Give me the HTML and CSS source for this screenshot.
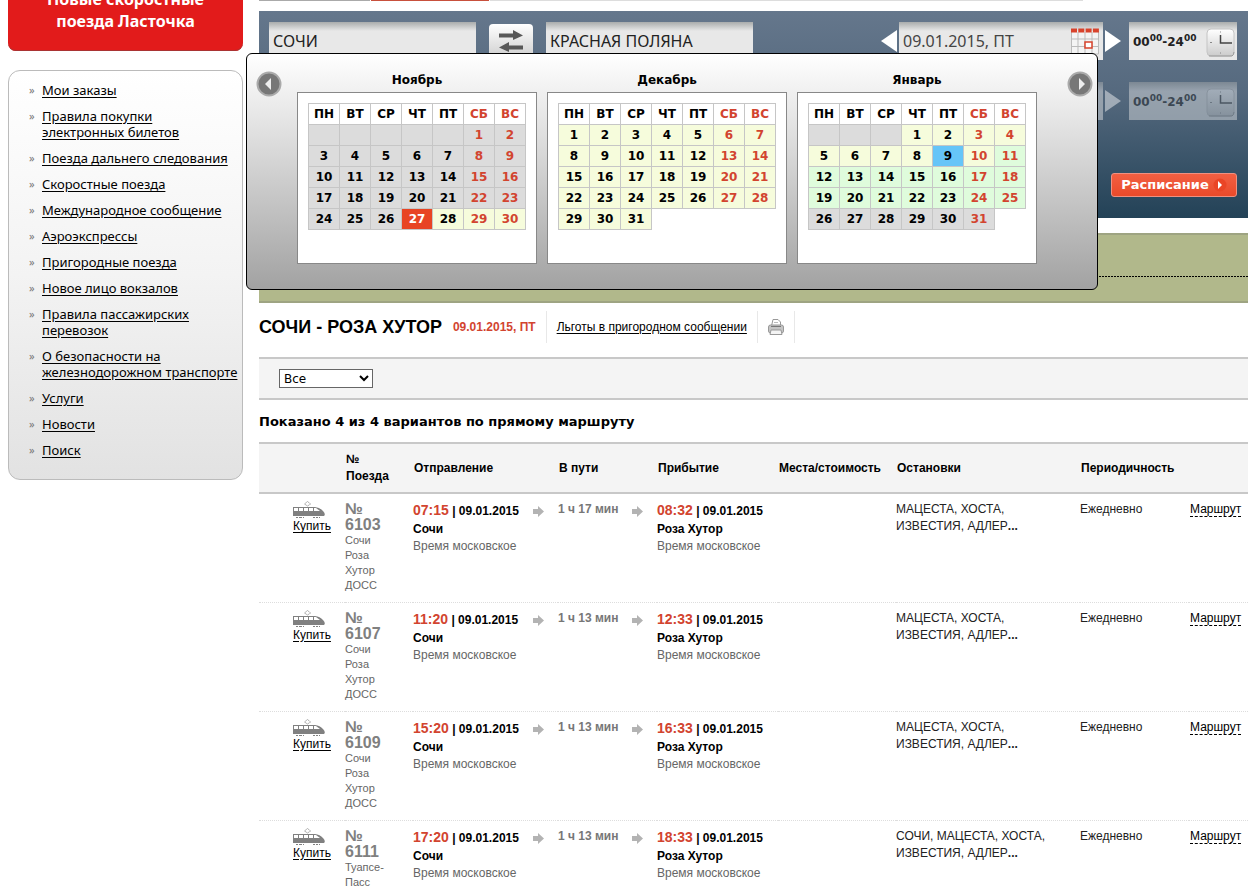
FILE: index.html
```html
<!DOCTYPE html>
<html lang="ru">
<head>
<meta charset="utf-8">
<title>Расписание: Сочи - Роза Хутор</title>
<link rel="stylesheet" href="styles.css">
</head>
<body>
<svg class="defs" aria-hidden="true">
  <symbol id="train" viewBox="0 0 32 17">
    <path d="M11.500 3 14.500 .5 17.500 3 14.500 5Z" fill="none" stroke="#888" stroke-dasharray="1.500 1"/>
    <path d="M0 6H22Q27 6.500 30 10Q33 13 31 15H0Z" fill="#808080"/>
    <path d="M1 7h4v3H1zM6 7h4v3H6zM11 7h4v3h-4zM16 7h4v3h-4zM21 7h2l4 3h-6z" fill="#fff"/>
    <path d="M3 16.500h2m1 0h3M10 16.500h1M20 16.500h2m1 0h2m1 0h1" stroke="#808080"/>
  </symbol>
  <symbol id="arrow" viewBox="0 0 11 11">
    <path d="M0 3h5V0l6 5.500L5 11V8H0z" fill="#b3b3b3"/>
  </symbol>
  <symbol id="clock" viewBox="0 0 30 29">
    <rect x="1" y="1" width="27" height="27" rx="4" fill="url(#face)" stroke="#c4c4c4"/>
    <path d="M3 28h23q2-1 2-4" fill="none" stroke="#999"/>
    <path d="M14.500 7v8H26" fill="none" stroke="#444" stroke-width="1.500"/>
    <path d="M14 4h1M4 14.500h2M14 25h1" stroke="#888"/>
  </symbol>
  <linearGradient id="face" x2="0" y2="1"><stop stop-color="#fff"/><stop offset="1" stop-color="#ccc"/></linearGradient>
</svg>
<div class="page">
  <aside class="sidebar">
    <a class="banner" href="#"><span>Новые скоростные поезда Ласточка</span></a>
    <nav class="menu">
      <ul>
        <li><a href="#">Мои заказы</a></li>
        <li><a href="#">Правила покупки<br>электронных билетов</a></li>
        <li><a href="#">Поезда дальнего следования</a></li>
        <li><a href="#">Скоростные поезда</a></li>
        <li><a href="#">Международное сообщение</a></li>
        <li><a href="#">Аэроэкспрессы</a></li>
        <li><a href="#">Пригородные поезда</a></li>
        <li><a href="#">Новое лицо вокзалов</a></li>
        <li><a href="#">Правила пассажирских<br>перевозок</a></li>
        <li><a href="#">О безопасности на<br>железнодорожном транспорте</a></li>
        <li><a href="#">Услуги</a></li>
        <li><a href="#">Новости</a></li>
        <li><a href="#">Поиск</a></li>
      </ul>
    </nav>
  </aside>
  <main class="content">
    <div class="tabs"><span class="tab"></span><span class="tab tab-active"></span><span class="tab tab-rest"></span></div>
    <form class="search">
      <div class="search-row">
        <input class="field station" aria-label="Откуда" value="СОЧИ">
        <button class="swap" type="button" aria-label="Поменять местами">
          <svg width="26" height="24" viewBox="0 0 26 24"><path d="M1 4.500h14V1l10 5.500L15 11V8.500H1zM25 16.500H11V13L1 18.500 11 23v-2.500h14z" fill="#585858"/></svg>
        </button>
        <input class="field station" aria-label="Куда" value="КРАСНАЯ ПОЛЯНА">
        <div class="when">
          <button class="step" type="button" aria-label="Предыдущий день"><svg width="16" height="22"><path d="M16 0v22L0 11z" fill="#fff"/></svg></button>
          <div class="field date">
            <input aria-label="Дата туда" value="09.01.2015, ПТ">
            <svg width="28" height="27" viewBox="0 0 28 27"><path d="M.5 3v23h27V3M.5 11h27M.5 18.500h27M7 4v22M14 4v22M21 4v22" fill="#f4f4f4" stroke="#bbb"/><path d="M0 2.500h28" stroke="#d8432c" stroke-width="4" stroke-dasharray="6 1.300"/><path d="M14 14h7v6h-7z" fill="#fff" stroke="#d8432c" stroke-width="1.500"/></svg>
          </div>
          <button class="step" type="button" aria-label="Следующий день"><svg width="16" height="22"><path d="M0 0v22L16 11z" fill="#fff"/></svg></button>
        </div>
        <button class="field time" type="button"><span>00<sup>00</sup>-24<sup>00</sup></span><svg width="30" height="29"><use href="#clock"/></svg></button>
      </div>
      <div class="search-row row-back">
        <div class="when">
          <div class="field date"><input aria-label="Дата обратно"></div>
          <button class="step" type="button" aria-label="Следующий день"><svg width="16" height="22"><path d="M0 0v22L16 11z" fill="#fff"/></svg></button>
        </div>
        <button class="field time" type="button"><span>00<sup>00</sup>-24<sup>00</sup></span><svg width="30" height="29"><use href="#clock"/></svg></button>
      </div>
      <button class="submit" type="submit">Расписание<svg width="14" height="14"><circle cx="7" cy="7" r="6.500" fill="#ea4526"/><path d="M5 3v8l4-4z" fill="#fff"/></svg></button>

      <div class="calendar">
        <button class="turn" type="button" aria-label="Назад"><svg width="26" height="26"><circle cx="13" cy="13" r="11.500" fill="#777" stroke="#aaa" stroke-width="2"/><path d="M15 7v12l-6-6z" fill="#eee"/></svg></button>
        <div class="months">
          <section class="month">
            <h2>Ноябрь</h2>
            <div class="sheet"><table>
              <tr><th>ПН<th>ВТ<th>СР<th>ЧТ<th>ПТ<th>СБ<th>ВС
              <tr class="past"><td><td><td><td><td><td>1<td>2
              <tr class="past"><td>3<td>4<td>5<td>6<td>7<td>8<td>9
              <tr class="past"><td>10<td>11<td>12<td>13<td>14<td>15<td>16
              <tr class="past"><td>17<td>18<td>19<td>20<td>21<td>22<td>23
              <tr class="past"><td>24<td>25<td>26<td class="today">27<td class="open">28<td class="open">29<td class="open">30
            </table></div>
          </section>
          <section class="month">
            <h2>Декабрь</h2>
            <div class="sheet"><table>
              <tr><th>ПН<th>ВТ<th>СР<th>ЧТ<th>ПТ<th>СБ<th>ВС
              <tr><td>1<td>2<td>3<td>4<td>5<td>6<td>7
              <tr><td>8<td>9<td>10<td>11<td>12<td>13<td>14
              <tr><td>15<td>16<td>17<td>18<td>19<td>20<td>21
              <tr><td>22<td>23<td>24<td>25<td>26<td>27<td>28
              <tr><td>29<td>30<td>31
            </table></div>
          </section>
          <section class="month">
            <h2>Январь</h2>
            <div class="sheet"><table>
              <tr><th>ПН<th>ВТ<th>СР<th>ЧТ<th>ПТ<th>СБ<th>ВС
              <tr><td class="none"><td class="none"><td class="none"><td>1<td>2<td>3<td>4
              <tr><td>5<td>6<td>7<td>8<td class="chosen">9<td>10<td class="sale">11
              <tr class="later"><td>12<td>13<td>14<td>15<td>16<td>17<td>18
              <tr class="later"><td>19<td>20<td>21<td>22<td>23<td>24<td>25
              <tr class="past"><td>26<td>27<td>28<td>29<td>30<td>31
            </table></div>
          </section>
        </div>
        <button class="turn turn-next" type="button" aria-label="Вперёд"><svg width="26" height="26"><circle cx="13" cy="13" r="11.500" fill="#777" stroke="#aaa" stroke-width="2"/><path d="M12 7v12l6-6z" fill="#eee"/></svg></button>
      </div>
    </form>
    <div class="notice"></div>

    <header class="title">
      <h1>СОЧИ - РОЗА ХУТОР</h1>
      <span class="title-date">09.01.2015, ПТ</span>
      <span class="cell"><a href="#">Льготы в пригородном сообщении</a></span>
      <button class="cell print" type="button" aria-label="Печать">
        <svg width="16" height="16" viewBox="0 0 16 16"><path d="M3.500 7 5 .5h5L12.500 3V7" fill="#fff" stroke="#999"/><path d="M6 3.500h4" stroke="#bbb"/><rect x=".5" y="6" width="15" height="8" rx="2" fill="#c4c4c4" stroke="#999"/><path d="M3 7.500h10" stroke="#777"/><path d="M3 11h10l1 4.500H2z" fill="#f4f4f4" stroke="#999"/></svg>
      </button>
    </header>
    <div class="filter">
      <select aria-label="Фильтр"><option>Все</option></select>
    </div>
    <p class="shown">Показано 4 из 4 вариантов по прямому маршруту</p>

    <table class="trains">
      <colgroup><col class="c-buy"><col class="c-num"><col class="c-dep"><col class="c-dur"><col class="c-arr"><col class="c-cost"><col><col class="c-per"><col class="c-route"></colgroup>
      <thead>
        <tr><th></th><th>№ Поезда</th><th>Отправление</th><th>В пути</th><th>Прибытие</th><th>Места/стоимость</th><th>Остановки</th><th>Периодичность</th><th></th></tr>
      </thead>
      <tbody>
        <tr>
          <td class="buy"><svg width="32" height="17"><use href="#train"/></svg><a href="#">Купить</a></td>
          <td class="num"><b>№ 6103</b><span>Сочи Роза Хутор ДОСС</span></td>
          <td><div class="leg"><div><b><i>07:15</i> | 09.01.2015</b><b>Сочи</b><span>Время московское</span></div><svg width="11" height="11"><use href="#arrow"/></svg></div></td>
          <td><div class="leg"><strong>1 ч 17 мин</strong><svg width="11" height="11"><use href="#arrow"/></svg></div></td>
          <td><div class="leg"><div><b><i>08:32</i> | 09.01.2015</b><b>Роза Хутор</b><span>Время московское</span></div></div></td>
          <td></td>
          <td class="stops">МАЦЕСТА, ХОСТА, ИЗВЕСТИЯ, АДЛЕР<b>...</b></td>
          <td>Ежедневно</td>
          <td><a class="route" href="#">Маршрут</a></td>
        </tr>
        <tr>
          <td class="buy"><svg width="32" height="17"><use href="#train"/></svg><a href="#">Купить</a></td>
          <td class="num"><b>№ 6107</b><span>Сочи Роза Хутор ДОСС</span></td>
          <td><div class="leg"><div><b><i>11:20</i> | 09.01.2015</b><b>Сочи</b><span>Время московское</span></div><svg width="11" height="11"><use href="#arrow"/></svg></div></td>
          <td><div class="leg"><strong>1 ч 13 мин</strong><svg width="11" height="11"><use href="#arrow"/></svg></div></td>
          <td><div class="leg"><div><b><i>12:33</i> | 09.01.2015</b><b>Роза Хутор</b><span>Время московское</span></div></div></td>
          <td></td>
          <td class="stops">МАЦЕСТА, ХОСТА, ИЗВЕСТИЯ, АДЛЕР<b>...</b></td>
          <td>Ежедневно</td>
          <td><a class="route" href="#">Маршрут</a></td>
        </tr>
        <tr>
          <td class="buy"><svg width="32" height="17"><use href="#train"/></svg><a href="#">Купить</a></td>
          <td class="num"><b>№ 6109</b><span>Сочи Роза Хутор ДОСС</span></td>
          <td><div class="leg"><div><b><i>15:20</i> | 09.01.2015</b><b>Сочи</b><span>Время московское</span></div><svg width="11" height="11"><use href="#arrow"/></svg></div></td>
          <td><div class="leg"><strong>1 ч 13 мин</strong><svg width="11" height="11"><use href="#arrow"/></svg></div></td>
          <td><div class="leg"><div><b><i>16:33</i> | 09.01.2015</b><b>Роза Хутор</b><span>Время московское</span></div></div></td>
          <td></td>
          <td class="stops">МАЦЕСТА, ХОСТА, ИЗВЕСТИЯ, АДЛЕР<b>...</b></td>
          <td>Ежедневно</td>
          <td><a class="route" href="#">Маршрут</a></td>
        </tr>
        <tr>
          <td class="buy"><svg width="32" height="17"><use href="#train"/></svg><a href="#">Купить</a></td>
          <td class="num"><b>№ 6111</b><span>Туапсе-Пасс</span></td>
          <td><div class="leg"><div><b><i>17:20</i> | 09.01.2015</b><b>Сочи</b><span>Время московское</span></div><svg width="11" height="11"><use href="#arrow"/></svg></div></td>
          <td><div class="leg"><strong>1 ч 13 мин</strong><svg width="11" height="11"><use href="#arrow"/></svg></div></td>
          <td><div class="leg"><div><b><i>18:33</i> | 09.01.2015</b><b>Роза Хутор</b><span>Время московское</span></div></div></td>
          <td></td>
          <td class="stops">СОЧИ, МАЦЕСТА, ХОСТА, ИЗВЕСТИЯ, АДЛЕР<b>...</b></td>
          <td>Ежедневно</td>
          <td><a class="route" href="#">Маршрут</a></td>
        </tr>
      </tbody>
    </table>
  </main>
</div>
</body>
</html>
```
FILE: styles.css
```css
* { box-sizing: border-box; }

body {
  margin: 0;
  background: #fff;
  color: #000;
  font: 12px/17px "Liberation Sans", Arial, sans-serif;
}

a { color: inherit; }
button { padding: 0; border: 0; background: none; font: inherit; color: inherit; }
svg { display: block; flex: none; }
.defs { position: absolute; width: 0; height: 0; }

.page { display: flex; align-items: flex-start; gap: 16px; padding: 0 8px; }

/* sidebar */
.sidebar { flex: 0 0 235px; }

.banner {
  display: flex;
  align-items: flex-end;
  height: 51px;
  padding: 0 32px 19px;
  overflow: hidden;
  border-radius: 0 0 8px 8px;
  background: #e21b1b;
  box-shadow: inset 0 -1px #a33;
  color: #fff;
  font: bold 16px/22px "Noto Sans", sans-serif;
  text-align: center;
  text-decoration: none;
}

.menu {
  margin-top: 19px;
  padding: 11px 2px 11px 33px;
  border: 1px solid #bbb;
  border-radius: 12px;
  background: linear-gradient(#fff, #f3f3f3 50%, #e2e2e2);
  font: 13px/16px "Noto Sans", Verdana, sans-serif;
}

.menu ul { margin: 0; padding: 0; list-style: none; }
.menu li { position: relative; margin-bottom: 10px; }
.menu li::before { content: "»"; position: absolute; left: -13px; color: #777; font-size: 11px; }
.menu a { text-underline-offset: 2px; }

/* search panel */
.content { flex: 1; min-width: 0; }
.tabs { display: flex; gap: 1px; height: 11px; }
.tab { flex: 0 0 111px; height: 1px; background: #aaa; }
.tab-active { flex-basis: 118px; background: #c8503c; }
.tab-rest { flex-basis: 593px; background: #ddd; }

.search {
  position: relative;
  height: 207px;
  padding: 11px 11px 0 10px;
  background: linear-gradient(#65778c, #55697e 40%, #234257);
}

.search-row { display: flex; align-items: flex-start; margin-bottom: 22px; }
.row-back { justify-content: flex-end; opacity: .45; }

.field {
  height: 38px;
  border: 0;
  background: linear-gradient(#a9acac, #e8e8e8 9px);
  color: #222;
  font: 16px/20px "Noto Sans", Tahoma, sans-serif;
}
.station { width: 207px; padding: 0 4px; }
.swap {
  display: flex;
  justify-content: center;
  width: 44px;
  height: 36px;
  margin: 2px 13px 0;
  padding-top: 5px;
  border-radius: 4px;
  background: linear-gradient(#fff, #ccc);
}
.when { display: flex; gap: 2px; margin-left: auto; }
.step { align-self: center; }
.date { display: flex; align-items: center; justify-content: space-between; width: 204px; padding: 0 4px; }
.date input { width: 140px; padding: 0; border: 0; background: none; color: #444; font: inherit; }
.time {
  display: flex;
  align-items: center;
  justify-content: space-between;
  width: 108px;
  margin-left: 8px;
  padding: 2px 1px 0 4px;
  font: bold 12px/20px "DejaVu Sans", Verdana, sans-serif;
}
.time sup { font-size: 9px; line-height: 0; vertical-align: 5px; }

.submit {
  display: flex;
  align-items: center;
  justify-content: center;
  gap: 4px;
  width: 126px;
  height: 24px;
  margin: 53px 0 0 auto;
  border: 1px solid #f09080;
  border-radius: 3px;
  background: linear-gradient(#f25f42, #ea4a2a);
  color: #fff;
  font: bold 13px/20px "DejaVu Sans", Verdana, sans-serif;
}

/* calendar popup */
.calendar {
  position: absolute;
  top: 42px;
  left: -13px;
  display: flex;
  align-items: flex-start;
  width: 852px;
  padding: 16px 4px 25px 9px;
  border: 1px solid #000;
  border-radius: 6px;
  background: linear-gradient(#fff, #a2a2a2);
  font: bold 12px/20px "DejaVu Sans", Verdana, sans-serif;
}
.turn { margin-top: 1px; }
.turn-next { margin-left: auto; }
.months { display: flex; gap: 10px; margin-left: 15px; }
.month h2 { margin: 0 0 2px; font: inherit; text-align: center; }
.sheet { width: 240px; height: 172px; padding: 10px; border: 1px solid #888; background: #fff; }
.sheet table { border-collapse: collapse; }
.sheet th, .sheet td {
  width: 31px;
  height: 21px;
  padding: 0;
  border: 1px solid #c6c6c6;
  text-align: center;
}
.sheet td { background: #f6fcdc; }
.sheet :is(th, td):nth-child(n+6) { color: #d2442f; }
.sheet .past td, .sheet .none { background: #dcdcdc; }
.sheet .later td, .sheet .sale { background: #dffcdc; }
.sheet .past .open { background: #f6fcdc; }
.sheet .past .today { background: #e84424; color: #fff; }
.sheet .chosen { background: #66c5f8; }

/* results */
.notice {
  height: 70px;
  margin-top: 15px;
  border: solid #9ea482;
  border-width: 2px 0;
  background: repeating-linear-gradient(90deg, #000 0 2px, #b1b88b 2px 3px) 0 41px / 100% 1px no-repeat, #b1b88b;
}

.title { display: flex; align-items: center; height: 48px; margin-bottom: 6px; }
.title h1 { margin: 0 11px 0 0; font-size: 18px; line-height: 24px; }
.title-date { margin-right: 10px; color: #d2442f; font-weight: bold; }
.cell { display: flex; align-items: center; height: 32px; padding: 0 10px; border-left: 1px solid #e8e8e8; }
.cell a { text-underline-offset: 2px; }
.print { border-right: 1px solid #e8e8e8; }

.filter {
  padding: 10px 20px;
  border: solid #c8c8c8;
  border-width: 2px 0;
  background: #f4f4f4;
}
.filter select {
  display: block;
  width: 94px;
  height: 19px;
  padding: 0;
  border: 1px solid #666;
  background: #fff;
  color: #000;
  font: 12px/17px "DejaVu Sans", Verdana, sans-serif;
}

.shown { margin: 12px 0 10px; font: bold 13px/20px "DejaVu Sans", Verdana, sans-serif; }

.trains { width: 100%; border-collapse: collapse; table-layout: fixed; }
.c-buy { width: 86px; }
.c-num { width: 68px; }
.c-dep { width: 145px; }
.c-dur { width: 99px; }
.c-arr { width: 121px; }
.c-cost { width: 118px; }
.c-per { width: 109px; }
.c-route { width: 59px; }

.trains th {
  height: 50px;
  padding: 0 1px;
  border: solid #c8c8c8;
  border-width: 2px 0;
  background: #f4f4f4;
  text-align: left;
}
.trains th:nth-child(2) { padding-right: 20px; }
.trains td { height: 109px; padding: 7px 0 0; border-bottom: 1px dotted #ddd; vertical-align: top; color: #222; }
.trains tr:last-child td { height: 68px; border: 0; }
.trains .buy { padding-left: 34px; color: #000; }
.buy a { text-underline-offset: 2px; }
.trains .num { padding-right: 16px; color: #666; font-size: 11px; line-height: 15px; }
.num b, .num span { display: block; }
.num b { width: 40px; color: #808080; font-size: 16px; line-height: 16px; }
.leg { display: flex; justify-content: space-between; padding-right: 14px; white-space: nowrap; }
.leg svg { margin-top: 5px; }
.leg div > * { display: block; }
.leg b { color: #000; line-height: 18px; }
.leg i { color: #d2442f; font-size: 14px; font-style: normal; }
.leg span { color: #666; line-height: 16px; }
.leg strong { color: #777; }
.trains .stops { padding-right: 20px; }
.route { border-bottom: 1px dashed #000; color: #000; text-decoration: none; }
.trains td:last-child { padding-left: 1px; line-height: 15px; padding-top: 8px; }
```
